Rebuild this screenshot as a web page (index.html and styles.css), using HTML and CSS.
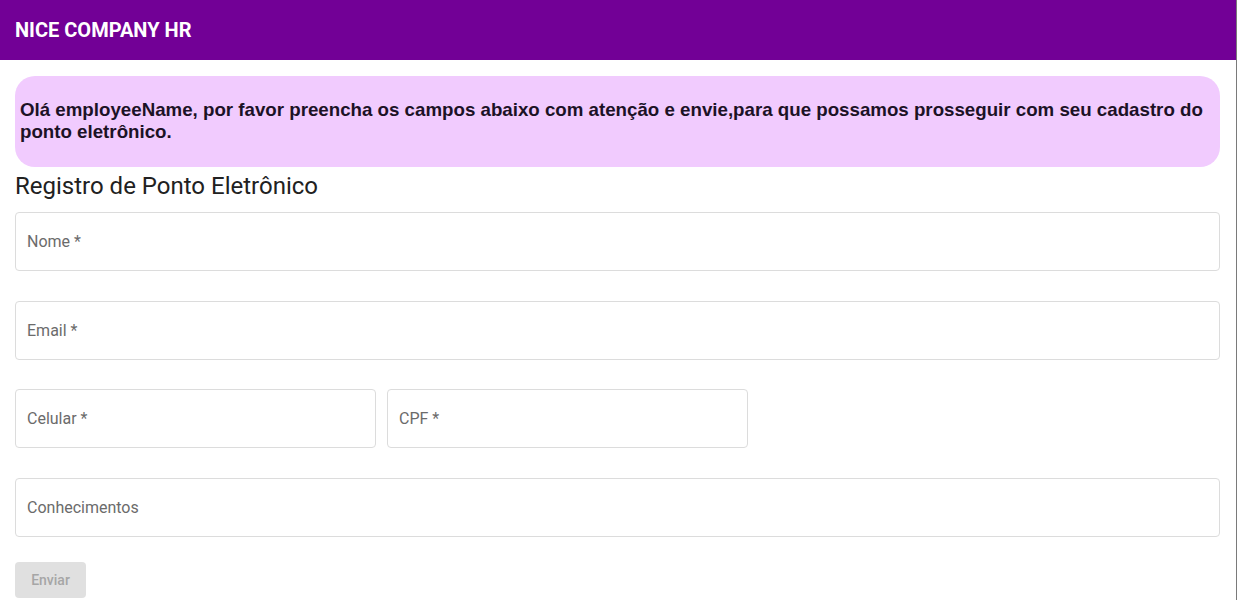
FILE: index.html
```html
<!DOCTYPE html>
<html lang="pt-BR">
<head>
<meta charset="utf-8">
<title>NICE COMPANY HR</title>
<link rel="stylesheet" href="styles.css">
</head>
<body>
<div class="page">
  <header class="topbar">
    <div class="brand">NICE COMPANY HR</div>
  </header>
  <main class="content">
    <div class="notice">Olá employeeName, por favor preencha os campos abaixo com atenção e envie,para que possamos prosseguir com seu cadastro do ponto eletrônico.</div>
    <h2 class="title">Registro de Ponto Eletrônico</h2>
    <form class="form">
      <div class="field"><span class="label">Nome *</span></div>
      <div class="field"><span class="label">Email *</span></div>
      <div class="row">
        <div class="field half"><span class="label">Celular *</span></div>
        <div class="field half"><span class="label">CPF *</span></div>
      </div>
      <div class="field"><span class="label">Conhecimentos</span></div>
      <div class="actions"><button type="button" class="btn" disabled>Enviar</button></div>
    </form>
  </main>
</div>
</body>
</html>
```
FILE: styles.css
```css
html, body {
  margin: 0;
  padding: 0;
  background: #ffffff;
}
body {
  font-family: Roboto, "Liberation Sans", sans-serif;
}
.page {
  width: 1237px;
  min-height: 600px;
  box-sizing: border-box;
  border-right: 1px solid #7a7a7a;
}
.topbar {
  height: 60px;
  background: #720096;
  display: flex;
  align-items: center;
  padding-left: 15px;
}
.brand {
  color: #ffffff;
  font-family: Roboto, sans-serif;
  font-weight: 700;
  font-size: 20px;
  letter-spacing: 0;
}
.content {
  padding: 16px 16px 0 15px;
}
.notice {
  background: #f1cbfe;
  border-radius: 20px;
  padding: 23px 10px 24px 5px;
  font-family: "Liberation Sans", Arial, sans-serif;
  font-weight: 700;
  font-size: 18.72px;
  line-height: 22px;
  color: #1c1226;
}
.title {
  margin: 5px 0 12px;
  font-family: Roboto, sans-serif;
  font-weight: 400;
  font-size: 24px;
  line-height: 28px;
  color: #212121;
}
.form {
  display: flex;
  flex-direction: column;
  gap: 30px;
}
.field {
  height: 59px;
  box-sizing: border-box;
  border: 1px solid #dcdcdc;
  border-radius: 4px;
  display: flex;
  align-items: center;
  padding-left: 11px;
}
.label {
  font-size: 16px;
  color: #6b6b6b;
}
.row {
  display: flex;
  gap: 11px;
  margin-top: -1px;
}
.half {
  width: 361px;
}
.actions {
  margin-top: -5px;
}
.btn {
  width: 71px;
  height: 36px;
  border: none;
  border-radius: 4px;
  background: #e0e0e0;
  color: #a6a6a6;
  font-family: Roboto, sans-serif;
  font-size: 14px;
  font-weight: 500;
  padding: 0;
}
```
